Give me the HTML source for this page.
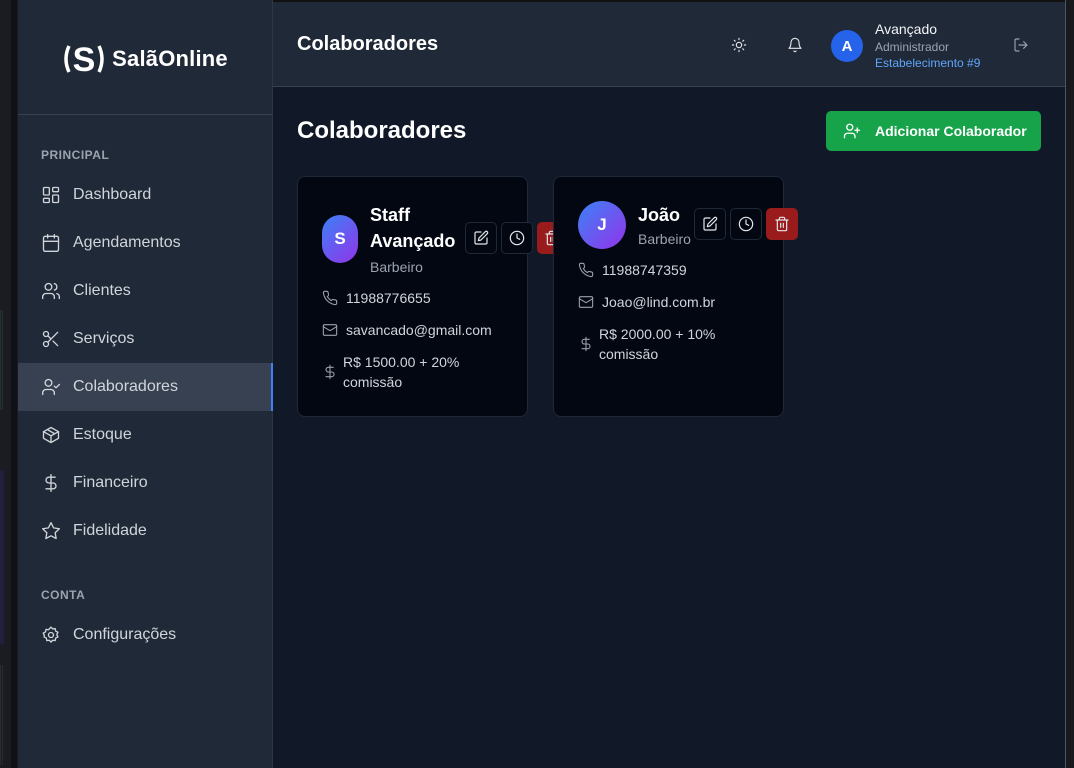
<!DOCTYPE html>
<html><head><meta charset="utf-8"><style>
*{box-sizing:border-box;margin:0;padding:0}
body{width:1074px;height:768px;overflow:hidden;background:#16171b;font-family:"Liberation Sans",sans-serif;position:relative;color:#fff}
.lstrip{position:absolute;left:0;top:0;width:18px;height:768px;background:#1b1c21}
.lstrip .line{position:absolute;left:11px;top:0;width:6px;height:768px;background:#101116}
.side{position:absolute;left:18px;top:0;width:255px;height:768px;background:#1f2937;border-right:1px solid #2d3748}
.logo{position:absolute;left:0;top:0;width:254px;height:115px;border-bottom:1px solid #374151;display:flex;align-items:center;justify-content:center;gap:6px;padding-top:4px}
.logo .t{font-size:22px;font-weight:bold;letter-spacing:.2px}
.sec{position:absolute;left:23px;font-size:12px;font-weight:bold;color:#9ca3af;letter-spacing:.5px}
.item{position:absolute;left:0;width:254px;height:48px;display:flex;align-items:center;padding-left:23px;gap:12px;font-size:16px;color:#d1d5db}
.item.act{background:#374151;border-right:2px solid #3b82f6;width:255px}
.item svg{width:20px;height:20px;fill:none;stroke:#d1d5db;stroke-width:1.6;stroke-linecap:round;stroke-linejoin:round}
.main{position:absolute;left:273px;top:0;width:793px;height:768px;background:#111827;border-right:1px solid #4b5563}
.rstrip{position:absolute;left:1066px;top:0;width:8px;height:768px;background:#18191d}
.hdr{position:absolute;left:0;top:0;width:792px;height:87px;background:#1f2937;border-bottom:1px solid #374151;border-top:2px solid #111}
.hdr h1{position:absolute;left:24px;top:31px;font-size:20px;font-weight:bold}
.ic{position:absolute;fill:none;stroke:#e5e7eb;stroke-width:1.7;stroke-linecap:round;stroke-linejoin:round}
.av{position:absolute;border-radius:50%;display:flex;align-items:center;justify-content:center;font-weight:bold;color:#fff}
h2{position:absolute;left:24px;top:117px;font-size:24px;font-weight:bold}
.btn{position:absolute;left:553px;top:111px;width:215px;height:40px;background:#16a34a;border-radius:5px;display:flex;align-items:center;padding-left:17px;gap:14px;font-size:14px;font-weight:bold;color:#fff}
.card{position:absolute;top:176px;width:231px;height:241px;background:#030712;border:1px solid #1f2937;border-radius:8px}
.grad{background:linear-gradient(135deg,#3b82f6,#9333ea)}
.nm{position:absolute;font-size:18px;font-weight:bold;line-height:26px}
.role{position:absolute;font-size:14px;color:#9ca3af}
.ab{position:absolute;width:32px;height:32px;border:1px solid #1f2937;border-radius:5px;background:#030712;display:flex;align-items:center;justify-content:center}
.ab.del{background:#991b1b;border-color:#991b1b}
.ab svg{width:16px;height:16px;fill:none;stroke:#e5e7eb;stroke-width:1.8;stroke-linecap:round;stroke-linejoin:round}
.row{position:absolute;font-size:14px;color:#d1d5db;line-height:20px}
.row svg{position:absolute;left:-24px;top:2px;width:16px;height:16px;fill:none;stroke:#9ca3af;stroke-width:1.6;stroke-linecap:round;stroke-linejoin:round}
</style></head><body>
<div class="lstrip"><div class="line"></div>
<div style="position:absolute;left:0;top:310px;width:3px;height:100px;border:1px solid #24332b;border-radius:3px"></div>
<div style="position:absolute;left:0;top:470px;width:4px;height:175px;background:#231f3d;border-radius:3px"></div>
<div style="position:absolute;left:0;top:665px;width:3px;height:100px;border:1px solid #2a2b30;border-radius:3px"></div></div>
<div class="side">
<div class="logo"><svg width="44" height="36" viewBox="0 0 44 36"><path d="M7 5 Q1 18 7 31" stroke="#fff" stroke-width="3.5" fill="none"/><path d="M37 5 Q43 18 37 31" stroke="#fff" stroke-width="3.5" fill="none"/><text x="22" y="30" text-anchor="middle" font-family="Liberation Sans" font-weight="bold" font-size="34" fill="#fff">S</text></svg><span class="t">SalãOnline</span></div>
<div class="sec" style="top:148px">PRINCIPAL</div>
<div class="item" style="top:171px"><svg viewBox="0 0 24 24"><rect x="3" y="3" width="7" height="9" rx="1"/><rect x="14" y="3" width="7" height="5" rx="1"/><rect x="14" y="12" width="7" height="9" rx="1"/><rect x="3" y="16" width="7" height="5" rx="1"/></svg>Dashboard</div>
<div class="item" style="top:219px"><svg viewBox="0 0 24 24"><rect x="3" y="4" width="18" height="18" rx="2"/><path d="M16 2v4M8 2v4M3 10h18"/></svg>Agendamentos</div>
<div class="item" style="top:267px"><svg viewBox="0 0 24 24"><path d="M16 21v-2a4 4 0 0 0-4-4H6a4 4 0 0 0-4 4v2"/><circle cx="9" cy="7" r="4"/><path d="M22 21v-2a4 4 0 0 0-3-3.87M16 3.13a4 4 0 0 1 0 7.75"/></svg>Clientes</div>
<div class="item" style="top:315px"><svg viewBox="0 0 24 24"><circle cx="6" cy="6" r="3"/><circle cx="6" cy="18" r="3"/><path d="M20 4 8.12 15.88M14.47 14.48 20 20M8.12 8.12 12 12"/></svg>Serviços</div>
<div class="item act" style="top:363px"><svg viewBox="0 0 24 24"><path d="M16 21v-2a4 4 0 0 0-4-4H6a4 4 0 0 0-4 4v2"/><circle cx="9" cy="7" r="4"/><path d="m16 11 2 2 4-4"/></svg>Colaboradores</div>
<div class="item" style="top:411px"><svg viewBox="0 0 24 24"><path d="M21 8 12 3 3 8v8l9 5 9-5z"/><path d="M3 8l9 5 9-5M12 13v8M7.5 5.5l9 5"/></svg>Estoque</div>
<div class="item" style="top:459px"><svg viewBox="0 0 24 24"><path d="M12 2v20M17 5H9.5a3.5 3.5 0 0 0 0 7h5a3.5 3.5 0 0 1 0 7H6"/></svg>Financeiro</div>
<div class="item" style="top:507px"><svg viewBox="0 0 24 24"><path d="m12 2 3.09 6.26L22 9.27l-5 4.87 1.18 6.88L12 17.77l-6.18 3.25L7 14.14 2 9.27l6.91-1.01z"/></svg>Fidelidade</div>
<div class="sec" style="top:588px">CONTA</div>
<div class="item" style="top:611px"><svg viewBox="0 0 24 24"><circle cx="12" cy="12" r="3"/><path d="M12 2.5l2 2.2 3-.4.6 3 2.7 1.4-1.3 2.8 1.3 2.8-2.7 1.4-.6 3-3-.4-2 2.2-2-2.2-3 .4-.6-3-2.7-1.4L4 12.5 2.7 9.7l2.7-1.4.6-3 3 .4z"/></svg>Configurações</div>
</div>
<div class="main">
<div class="hdr"><h1>Colaboradores</h1>
<svg class="ic" style="left:458px;top:35px" width="16" height="16" viewBox="0 0 24 24"><circle cx="12" cy="12" r="4"/><path d="M12 2v2M12 20v2M4.9 4.9l1.4 1.4M17.7 17.7l1.4 1.4M2 12h2M20 12h2M4.9 19.1l1.4-1.4M17.7 6.3l1.4-1.4"/></svg>
<svg class="ic" style="left:514px;top:35px" width="16" height="16" viewBox="0 0 24 24"><path d="M6 8a6 6 0 0 1 12 0c0 7 3 9 3 9H3s3-2 3-9M10.3 21a1.94 1.94 0 0 0 3.4 0"/></svg>
<div class="av" style="left:558px;top:28px;width:32px;height:32px;background:#2563eb;font-size:15px">A</div>
<div style="position:absolute;left:602px;top:19px;font-size:14px;color:#f3f4f6">Avançado</div>
<div style="position:absolute;left:602px;top:38px;font-size:12px;color:#9ca3af">Administrador</div>
<div style="position:absolute;left:602px;top:54px;font-size:12px;color:#60a5fa">Estabelecimento #9</div>
<svg class="ic" style="left:740px;top:35px;stroke:#9ca3af" width="16" height="16" viewBox="0 0 24 24"><path d="M9 21H5a2 2 0 0 1-2-2V5a2 2 0 0 1 2-2h4M16 17l5-5-5-5M21 12H9"/></svg>
</div>
<h2>Colaboradores</h2>
<div class="btn"><svg width="18" height="18" viewBox="0 0 24 24" fill="none" stroke="#fff" stroke-width="1.8" stroke-linecap="round"><path d="M16 21v-2a4 4 0 0 0-4-4H6a4 4 0 0 0-4 4v2"/><circle cx="9" cy="7" r="4"/><path d="M19 8v6M22 11h-6"/></svg>Adicionar Colaborador</div>

<div class="card" style="left:24px">
<div class="av grad" style="left:24px;top:38px;width:36px;height:48px;border-radius:18px;font-size:17px">S</div>
<div class="nm" style="left:72px;top:25px">Staff<br>Avançado</div>
<div class="role" style="left:72px;top:82px">Barbeiro</div>
<div class="ab" style="left:167px;top:45px"><svg viewBox="0 0 24 24"><path d="M12 3H5a2 2 0 0 0-2 2v14a2 2 0 0 0 2 2h14a2 2 0 0 0 2-2v-7"/><path d="M18.4 2.6a2.1 2.1 0 0 1 3 3L12 15l-4 1 1-4z"/></svg></div>
<div class="ab" style="left:203px;top:45px"><svg viewBox="0 0 24 24"><circle cx="12" cy="12" r="10"/><path d="M12 6v6l4 2"/></svg></div>
<div class="ab del" style="left:239px;top:45px;width:17px;border-radius:5px 0 0 5px;overflow:hidden;justify-content:flex-start;padding-left:6px"><svg viewBox="0 0 24 24" style="flex:none"><path d="M3 6h18M19 6v14a2 2 0 0 1-2 2H7a2 2 0 0 1-2-2V6M8 6V4a2 2 0 0 1 2-2h4a2 2 0 0 1 2 2v2M10 11v6M14 11v6"/></svg></div>
<div class="row" style="left:48px;top:111px"><svg viewBox="0 0 24 24"><path d="M22 16.9v3a2 2 0 0 1-2.2 2 19.8 19.8 0 0 1-8.6-3.1 19.5 19.5 0 0 1-6-6A19.8 19.8 0 0 1 2.1 4.2 2 2 0 0 1 4.1 2h3a2 2 0 0 1 2 1.7c.1 1 .4 1.9.7 2.8a2 2 0 0 1-.5 2.1L8 9.9a16 16 0 0 0 6 6l1.3-1.3a2 2 0 0 1 2.1-.4c.9.3 1.8.6 2.8.7a2 2 0 0 1 1.7 2z"/></svg>11988776655</div>
<div class="row" style="left:48px;top:143px"><svg viewBox="0 0 24 24"><rect x="2" y="4" width="20" height="16" rx="2"/><path d="m22 7-10 6L2 7"/></svg>savancado@gmail.com</div>
<div class="row" style="left:45px;top:175px"><svg viewBox="0 0 24 24" style="left:-21px;top:12px"><path d="M12 2v20M17 5H9.5a3.5 3.5 0 0 0 0 7h5a3.5 3.5 0 0 1 0 7H6"/></svg>R$ 1500.00 + 20%<br>comissão</div>
</div>

<div class="card" style="left:280px">
<div class="av grad" style="left:24px;top:24px;width:48px;height:48px;font-size:17px">J</div>
<div class="nm" style="left:84px;top:25px">João</div>
<div class="role" style="left:84px;top:54px">Barbeiro</div>
<div class="ab" style="left:140px;top:31px"><svg viewBox="0 0 24 24"><path d="M12 3H5a2 2 0 0 0-2 2v14a2 2 0 0 0 2 2h14a2 2 0 0 0 2-2v-7"/><path d="M18.4 2.6a2.1 2.1 0 0 1 3 3L12 15l-4 1 1-4z"/></svg></div>
<div class="ab" style="left:176px;top:31px"><svg viewBox="0 0 24 24"><circle cx="12" cy="12" r="10"/><path d="M12 6v6l4 2"/></svg></div>
<div class="ab del" style="left:212px;top:31px"><svg viewBox="0 0 24 24"><path d="M3 6h18M19 6v14a2 2 0 0 1-2 2H7a2 2 0 0 1-2-2V6M8 6V4a2 2 0 0 1 2-2h4a2 2 0 0 1 2 2v2M10 11v6M14 11v6"/></svg></div>
<div class="row" style="left:48px;top:83px"><svg viewBox="0 0 24 24"><path d="M22 16.9v3a2 2 0 0 1-2.2 2 19.8 19.8 0 0 1-8.6-3.1 19.5 19.5 0 0 1-6-6A19.8 19.8 0 0 1 2.1 4.2 2 2 0 0 1 4.1 2h3a2 2 0 0 1 2 1.7c.1 1 .4 1.9.7 2.8a2 2 0 0 1-.5 2.1L8 9.9a16 16 0 0 0 6 6l1.3-1.3a2 2 0 0 1 2.1-.4c.9.3 1.8.6 2.8.7a2 2 0 0 1 1.7 2z"/></svg>11988747359</div>
<div class="row" style="left:48px;top:115px"><svg viewBox="0 0 24 24"><rect x="2" y="4" width="20" height="16" rx="2"/><path d="m22 7-10 6L2 7"/></svg>Joao@lind.com.br</div>
<div class="row" style="left:45px;top:147px"><svg viewBox="0 0 24 24" style="left:-21px;top:12px"><path d="M12 2v20M17 5H9.5a3.5 3.5 0 0 0 0 7h5a3.5 3.5 0 0 1 0 7H6"/></svg>R$ 2000.00 + 10%<br>comissão</div>
</div>
</div>
<div class="rstrip"></div>
</body></html>
